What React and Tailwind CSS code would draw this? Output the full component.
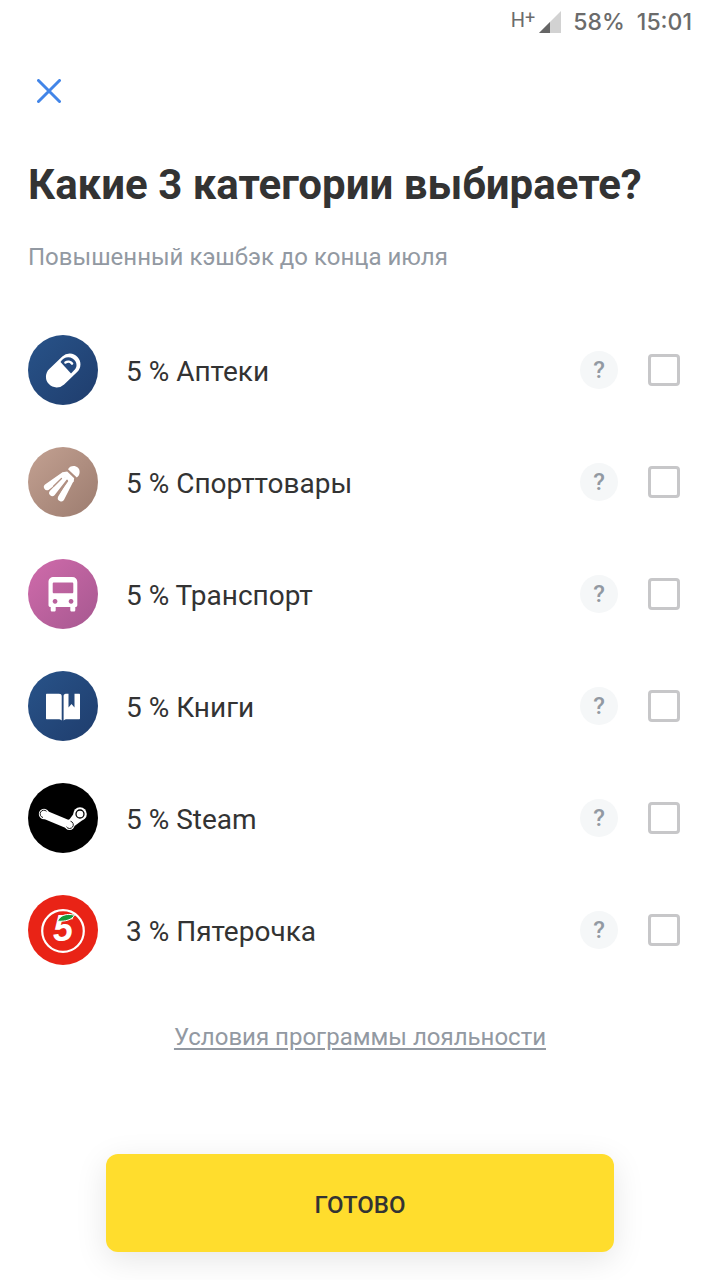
import { useState } from "react";

// круглая подложка иконки
const circleMap = {
  blue: "bg-linear-to-br from-[#285389] to-[#1f3d6d]",
  beige: "bg-linear-to-br from-[#c3a192] to-[#9c7c6f]",
  pink: "bg-linear-to-br from-[#d06bab] to-[#a65890]",
  black: "bg-black",
  red: "bg-[#e92316]",
};

function PillIcon() {
  return (
    <svg viewBox="0 0 70 70" className="size-full" aria-hidden="true">
      <path d="M28.700 41.700 41.700 29.300" stroke="#fff" strokeWidth="21.500" strokeLinecap="round" />
      <path d="M32.500 27c2.500-4.500 8-6 12-3.500 4.700 3 5 8 2.300 11L43 38.500Z" fill="#24497e" />
      <path d="M37.500 27.500c2-1.300 5-.8 6.500 1" stroke="#fff" strokeWidth="2.600" strokeLinecap="round" fill="none" />
    </svg>
  );
}

function ShuttlecockIcon() {
  return (
    <svg viewBox="0 0 70 70" className="size-full" aria-hidden="true">
      <g fill="#fff">
        <path d="M40 22.300c1.500-3.500 7-4.500 10-1.500 2.600 2.700 2 7.500-1.200 9.700Z" />
        <path d="M34.500 25.200 39.200 24.600 46.200 31.200 45.500 35 42.500 35.500 34 28Z" />
        <path d="M34.500 25.200 17 37.500a3.300 3.300 0 0 0 3.500 5.500L38 29.500Z" />
        <path d="M35.500 30 21.800 44a3.200 3.200 0 0 0 4.700 4.300L40 31Z" />
        <path d="M40.500 32.500 30.200 49.500a3.300 3.300 0 0 0 6 3L45.800 33.500Z" />
      </g>
      <path d="M33.500 31.500 25.500 39.200M39.500 34 31.500 45" stroke="#b39284" strokeWidth="1.300" strokeLinecap="round" />
    </svg>
  );
}

function BusIcon() {
  return (
    <svg viewBox="0 0 70 70" className="size-full" aria-hidden="true">
      <path
        fill="#fff"
        fillRule="evenodd"
        d="M26 18h18c3.500 0 5.300 2 5.300 5v23c0 1.500-.8 2-2 2v3c0 1-.7 1.500-1.500 1.500h-2c-.8 0-1.500-.5-1.500-1.500v-3H27.700v3c0 1-.7 1.500-1.500 1.500h-2c-.8 0-1.500-.5-1.500-1.500v-3c-1.400 0-2.200-.5-2.200-2V23c0-3 2-5 5.500-5ZM26 23.500c-.8 0-1.300.5-1.300 1.300V33c0 .8.5 1.300 1.300 1.300h18c.8 0 1.300-.5 1.300-1.300v-8.200c0-.8-.5-1.300-1.300-1.300ZM27 40a2.400 2.400 0 1 0 .1 0ZM43 40a2.400 2.400 0 1 0 .1 0Z"
      />
    </svg>
  );
}

function BookIcon() {
  return (
    <svg viewBox="0 0 70 70" className="size-full" aria-hidden="true">
      <g fill="#fff">
        <path d="M19 22.800h12c1.700 0 2.700.8 2.700 2.200v24.500c-.8-.9-2-1.200-3.500-1.200H19c-.7 0-1-.3-1-1V23.800c0-.7.300-1 1-1Z" />
        <path d="M35.600 25c0-1.300.8-2 2.200-2.200h2.700v13.700l3-3.500 3 3.500V22.800H51c.7 0 1 .3 1 1v23.500c0 .7-.3 1-1 1H39c-1.400 0-2.600.3-3.400 1.200Z" />
      </g>
    </svg>
  );
}

function SteamIcon() {
  return (
    <svg viewBox="0 0 70 70" className="size-full" aria-hidden="true">
      <circle cx="16" cy="31" r="5.200" fill="#fff" />
      <circle cx="52" cy="31" r="6.800" fill="#fff" />
      <circle cx="41.500" cy="41.800" r="5.200" fill="#fff" />
      <path d="M45.500 31 41 37 46.500 43 54 37.500Z" fill="#fff" />
      <path d="M18 27.500 42 37.500 39 45.500 15 35.500Z" fill="#fff" />
      <circle cx="52" cy="31" r="4" fill="none" stroke="#000" strokeWidth="1.300" />
      <path d="M18.500 28.300a3.700 3.700 0 1 0-3.500 6.200" fill="none" stroke="#000" strokeWidth=".9" />
      <path d="M42.500 38.200a3.700 3.700 0 1 1-4 5.600" fill="none" stroke="#000" strokeWidth=".9" />
    </svg>
  );
}

function FiveIcon() {
  return (
    <svg viewBox="0 0 70 70" className="size-full" aria-hidden="true">
      <circle cx="35" cy="36" r="20.800" fill="none" stroke="#fff" strokeWidth="2.200" />
      <text
        x="35"
        y="46"
        textAnchor="middle"
        fill="#fff"
        className="font-['Liberation_Sans'] text-[36px] font-bold italic"
      >
        5
      </text>
      <path d="M29.500 26.200c2.500-6 9-8 17-6-2.500 4.500-9 6.500-17 6Z" fill="#169b3a" stroke="#fff" strokeWidth="1" />
    </svg>
  );
}

const categories = [
  { id: "pharmacy", percent: 5, name: "Аптеки", color: "blue", Icon: PillIcon },
  { id: "sport", percent: 5, name: "Спорттовары", color: "beige", Icon: ShuttlecockIcon },
  { id: "transport", percent: 5, name: "Транспорт", color: "pink", Icon: BusIcon },
  { id: "books", percent: 5, name: "Книги", color: "blue", Icon: BookIcon },
  { id: "steam", percent: 5, name: "Steam", color: "black", Icon: SteamIcon },
  { id: "five", percent: 3, name: "Пятерочка", color: "red", Icon: FiveIcon },
];

function StatusBar() {
  return (
    <div className="flex h-11 items-center justify-end px-7 text-[#6b6b6b]">
      <span className="pb-1 text-xl">H</span>
      <span className="pb-2 text-lg">+</span>
      <svg viewBox="0 0 22 22" className="ml-1 size-[22px]" aria-hidden="true">
        <path d="M22 0v22H0Z" fill="#d2d2d2" />
        <path d="M11 11v11H0Z" fill="#666" />
      </svg>
      <span className="ml-3 font-['Inter',sans-serif] text-[23px] font-medium">58%</span>
      <span className="ml-3 font-['Inter',sans-serif] text-[23px] font-medium">15:01</span>
    </div>
  );
}

// Строка категории
function CategoryRow({ item, checked, onToggle }) {
  const { Icon } = item;
  return (
    <li className="flex items-center">
      <span className={`size-[70px] shrink-0 rounded-full ${circleMap[item.color]}`}>
        <Icon />
      </span>
      <label htmlFor={item.id} className="ml-7 flex-1 pt-1 text-[28px] leading-8">
        {item.percent} % {item.name}
      </label>
      <button
        type="button"
        aria-label={`Подробнее: ${item.name}`}
        className="size-[38px] rounded-full bg-[#f5f7f8] text-2xl font-medium text-[#9299a2]"
      >
        ?
      </button>
      <input
        id={item.id}
        type="checkbox"
        checked={checked}
        onChange={onToggle}
        className="ml-[30px] size-8 appearance-none rounded-sm border-3 border-[#c7c7c9] checked:bg-[#ffdd2d]"
      />
    </li>
  );
}

export default function App() {
  const [selected, setSelected] = useState([]);

  // можно выбрать не больше трёх
  const toggle = (id) => {
    setSelected((prev) => {
      if (prev.includes(id)) return prev.filter((x) => x !== id);
      return prev.length < 3 ? [...prev, id] : prev;
    });
  };

  return (
    <div className="min-h-screen bg-white font-['Roboto',sans-serif] text-[#333]">
      <StatusBar />

      <main className="pt-[26px] pb-7">
        <div className="px-7">
          <button type="button" aria-label="Закрыть" className="flex size-[42px] items-center justify-center">
            <svg viewBox="0 0 24 24" className="size-6" aria-hidden="true">
              <path d="M1.500 1.500 22.500 22.500M22.500 1.500 1.500 22.500" stroke="#4285e8" strokeWidth="3" strokeLinecap="round" />
            </svg>
          </button>

          <h1 className="mt-[47px] text-[42px] leading-[52px] font-bold">Какие 3 категории выбираете?</h1>
          <p className="mt-[30px] text-2xl leading-8 text-[#9299a2]">Повышенный кэшбэк до конца июля</p>
        </div>

        <ul className="mt-[62px] space-y-[42px] pr-10 pl-7">
          {categories.map((item) => (
            <CategoryRow
              key={item.id}
              item={item}
              checked={selected.includes(item.id)}
              onToggle={() => toggle(item.id)}
            />
          ))}
        </ul>

        <div className="mt-14 text-center">
          <a href="#terms" className="text-2xl leading-8 text-[#9299a2] underline underline-offset-3">
            Условия программы лояльности
          </a>
        </div>

        <div className="mt-[101px] px-[106px]">
          <button
            type="button"
            className="h-[98px] w-full rounded-xl bg-[#ffdd2d] pt-1 text-2xl font-medium shadow-[0_8px_32px_rgba(0,0,0,0.1)]"
          >
            ГОТОВО
          </button>
        </div>
      </main>
    </div>
  );
}
